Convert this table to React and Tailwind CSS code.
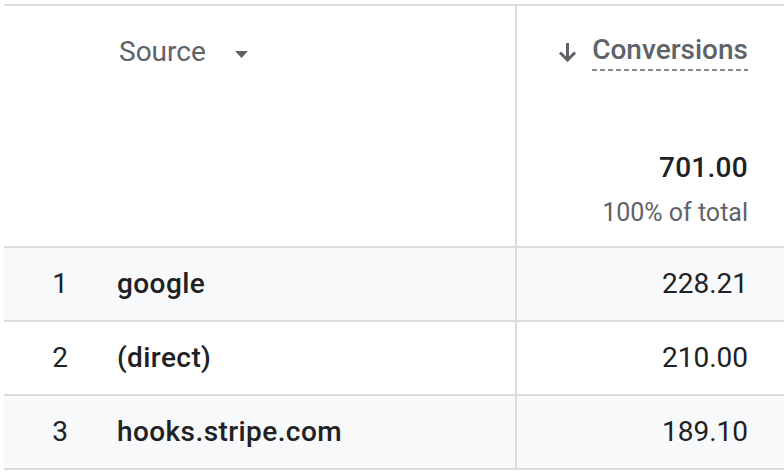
const rows = [
  { n: 1, name: "google", value: "228.21", shaded: true },
  { n: 2, name: "(direct)", value: "210.00", shaded: false },
  { n: 3, name: "hooks.stripe.com", value: "189.10", shaded: true },
];

function ArrowDown() {
  return (
    <svg width="19" height="20" viewBox="0 0 19 20" fill="none" className="stroke-[#5f6368]">
      <path d="M9.5 1v16.5M2 10.5l7.5 7.5 7.5-7.5" strokeWidth="3" />
    </svg>
  );
}

function Caret() {
  return (
    <svg width="13" height="7" viewBox="0 0 13 7" className="fill-[#5f6368]">
      <path d="M0 0h13L6.5 7z" />
    </svg>
  );
}

export default function App() {
  return (
    <div className="h-[472px] w-[784px] overflow-hidden bg-white pl-1 pt-1 font-['Roboto',sans-serif]">
      <div className="border-t-2 border-[#dadce0]">
        {/* Header */}
        <div className="grid h-[242px] grid-cols-[511px_1fr] border-b-2 border-[#dadce0]">
          <div className="flex items-start pl-[115px] pt-[30px]">
            <span className="text-[28px] leading-[32px] text-[#5f6368]">Source</span>
            <span className="ml-[29px] mt-[15px]">
              <Caret />
            </span>
          </div>
          <div className="flex flex-col items-end border-l-2 border-[#dadce0] pr-[36px] pt-[28px]">
            <div className="flex items-start">
              <span className="mt-[8px] mr-[15px]">
                <ArrowDown />
              </span>
              <div className="flex flex-col">
                <span className="text-[28px] font-medium leading-[32px] text-[#5f6368]">Conversions</span>
                <div className="mt-[3px] h-[2px] bg-[repeating-linear-gradient(to_right,#80868b_0_5px,transparent_5px_8px)]" />
              </div>
            </div>
            <span className="mt-[81px] text-[28px] font-medium leading-[32px] tracking-[0.01em] text-[#202124]">701.00</span>
            <span className="mt-[15px] text-[25px] leading-[28px] text-[#5f6368]">100% of total</span>
          </div>
        </div>

        {/* Rows */}
        {rows.map((r) => (
          <div
            key={r.n}
            className={`grid h-[74px] grid-cols-[511px_1fr] border-b-2 border-[#dadce0] ${r.shaded ? "bg-[#f8f9fa]" : "bg-white"}`}
          >
            <div className="flex items-center">
              <span className="w-[112px] text-center text-[28px] text-[#202124]">{r.n}</span>
              <span className="pl-[1px] text-[28px] font-medium tracking-[0.015em] text-[#202124]">{r.name}</span>
            </div>
            <div className="flex items-center justify-end border-l-2 border-[#dadce0] pr-[36px]">
              <span className="text-[28px] text-[#202124]">{r.value}</span>
            </div>
          </div>
        ))}
      </div>
    </div>
  );
}
